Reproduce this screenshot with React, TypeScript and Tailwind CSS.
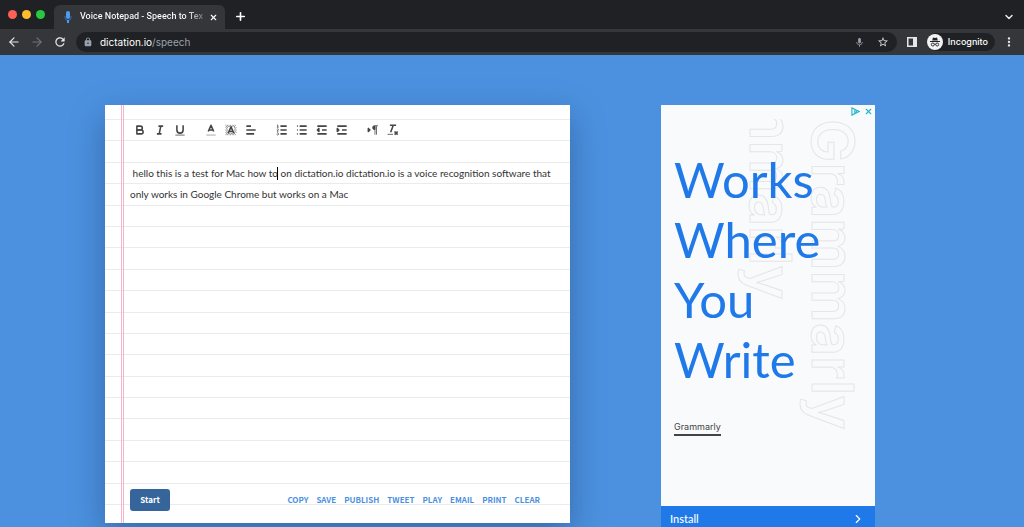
import React from 'react';
import { ArrowLeft, ArrowRight, ChevronDown, ChevronRight, Plus, X } from 'lucide-react';
import {
  MdLock,
  MdMic,
  MdMoreVert,
  MdRefresh,
  MdStarBorder,
} from 'react-icons/md';

const ICON_GROUPS: { label: string; icon: React.ReactNode }[][] = [
  [
    {
      label: 'Bold',
      icon: (
        <>
          <path d="M5,4H9.5a2.5,2.5,0,0,1,0,5H5Z" />
          <path d="M5,9h5.5a2.5,2.5,0,0,1,0,5H5Z" />
        </>
      ),
    },
    { label: 'Italic', icon: <path d="M7,4h6M5,14h6M8,14L10,4" /> },
    {
      label: 'Underline',
      icon: (
        <>
          <path d="M5,3V9a4,4,0,0,0,8,0V3" />
          <rect x="3" y="15" width="12" height="1" fill="currentColor" stroke="none" />
        </>
      ),
    },
  ],
  [
    {
      label: 'Text color',
      icon: (
        <>
          <path d="M3,15.5h12" opacity="0.4" strokeWidth="1.5" />
          <path d="M5.5,11L9,3l3.5,8M6.38,9h5.25" />
        </>
      ),
    },
    {
      label: 'Background color',
      icon: (
        <>
          <path d="M2,3h14M2,6h3M13,6h3M2,9h3M13,9h3M2,12h3M13,12h3M2,15h14" strokeDasharray="1 1" strokeWidth="1" />
          <path d="M3,4.5h12M3,7.5h2M14,7.5h2M3,10.5h2M14,10.5h2M3,13.5h12" strokeDasharray="1 1" strokeWidth="1" />
          <path d="M5.5,13L9,5l3.5,8M6.38,11h5.25" />
        </>
      ),
    },
    { label: 'Align', icon: <path d="M3,9h12M3,14h10M3,4h6" /> },
  ],
  [
    {
      label: 'Numbered list',
      icon: (
        <>
          <path d="M7,4h8M7,9h8M7,14h8" />
          <path
            d="M2.5,5.5h2M3.5,5.5v-3l-1,0.5M4.5,10.5h-2c0-.234,1.85-1.076,1.85-2.234A0.959,0.959,0,0,0,2.5,8.156M2.5,14.846a0.959,0.959,0,0,0,1.85-.109A0.7,0.7,0,0,0,3.75,14a0.688,0.688,0,0,0,.6-0.736,0.959,0.959,0,0,0-1.85-.109"
            strokeWidth="1"
          />
        </>
      ),
    },
    { label: 'Bulleted list', icon: <path d="M6,4h9M6,9h9M6,14h9M2.5,4h1M2.5,9h1M2.5,14h1" /> },
    {
      label: 'Decrease indent',
      icon: (
        <>
          <path d="M3,14h12M3,4h12M9,9h6" />
          <path d="M5,7v4L3,9Z" fill="currentColor" />
        </>
      ),
    },
    {
      label: 'Increase indent',
      icon: (
        <>
          <path d="M3,14h12M3,4h12M9,9h6" />
          <path d="M3,7v4L5,9Z" fill="currentColor" />
        </>
      ),
    },
  ],
  [
    {
      label: 'Text direction',
      icon: (
        <>
          <path d="M3,11L5,9,3,7Z" fill="currentColor" />
          <path d="M15.5,3.5H11a2.5,2.5,0,0,0,0,5h.5V3.5M11.5,4v11M13.5,4v11" fill="currentColor" strokeWidth="1" />
        </>
      ),
    },
    {
      label: 'Clear formatting',
      icon: (
        <>
          <path d="M5,3h8M6,12L9.35,3M11,11l4,4M15,11l-4,4" />
          <rect x="2" y="14" width="7" height="1" fill="currentColor" stroke="none" />
        </>
      ),
    },
  ],
];

const ACTIONS = ['COPY', 'SAVE', 'PUBLISH', 'TWEET', 'PLAY', 'EMAIL', 'PRINT', 'CLEAR'];

const RULES = Array.from({ length: 18 }, (_, i) => i);

const NOTE =
  ' hello this is a test for Mac how to on dictation.io dictation.io is a voice recognition software that only works in Google Chrome but works on a Mac';

const TabStrip: React.FC = () => {
  return (
    <div className="flex h-[29px] items-end bg-[#202124]">
      <div className="flex h-full w-[54px] items-center gap-[5px] pl-2">
        <span className="h-[9px] w-[9px] rounded-full bg-[#fe5f57]" />
        <span className="h-[9px] w-[9px] rounded-full bg-[#febc2e]" />
        <span className="h-[9px] w-[9px] rounded-full bg-[#28c840]" />
      </div>
      <div className="flex h-6 w-[171px] items-center rounded-t-md bg-[#35363a] pr-[7px] pl-2">
        <svg viewBox="0 0 12 12" className="h-3 w-3 shrink-0" aria-hidden="true">
          <rect x="4" y="0" width="4" height="8" rx="2" fill="#4a9df0" />
          <path d="M3,5v1.5a3,3,0,0,0,6,0V5" fill="none" stroke="#2f6fb5" />
          <path d="M6,9v3" stroke="#4a9df0" strokeWidth="2" />
        </svg>
        <span className="ml-[6px] flex-1 overflow-hidden whitespace-nowrap bg-linear-to-r from-white from-85% to-white/20 bg-clip-text font-[Roboto,sans-serif] text-[9px] font-medium text-transparent">
          Voice Notepad - Speech to Tex
        </span>
        <button type="button" aria-label="Close tab" className="ml-1 text-white">
          <X size={9} strokeWidth={3} />
        </button>
      </div>
      <button type="button" aria-label="New tab" className="ml-[9px] self-center pt-1 text-white">
        <Plus size={13} strokeWidth={3} />
      </button>
      <button type="button" aria-label="Search tabs" className="mr-[9px] ml-auto self-center pt-1 text-gray-200">
        <ChevronDown size={12} strokeWidth={3} />
      </button>
    </div>
  );
};

const AddressBar: React.FC = () => {
  return (
    <div className="flex h-[26px] items-center bg-[#35363a] text-gray-200">
      <div className="flex w-[76px] items-center gap-[9px] pl-[7px]">
        <button type="button" aria-label="Back">
          <ArrowLeft size={14} strokeWidth={2} />
        </button>
        <button type="button" aria-label="Forward" className="text-gray-500">
          <ArrowRight size={14} strokeWidth={2} />
        </button>
        <button type="button" aria-label="Reload">
          <MdRefresh size={14} />
        </button>
      </div>
      <div className="flex h-5 flex-1 items-center rounded-full bg-[#202124] pr-2 pl-[7px]">
        <MdLock size={10} className="text-gray-400" />
        <a href="#speech" className="ml-[7px] text-[10px] text-gray-400">
          <span className="text-white">dictation.io</span>/speech
        </a>
        <button type="button" aria-label="Microphone" className="ml-auto text-gray-400">
          <MdMic size={11} />
        </button>
        <button type="button" aria-label="Bookmark" className="ml-3 text-gray-300">
          <MdStarBorder size={12} />
        </button>
      </div>
      <button type="button" aria-label="Side panel" className="ml-[10px]">
        <svg viewBox="0 0 10 10" className="h-[10px] w-[10px]" aria-hidden="true">
          <rect x="0.75" y="0.75" width="8.5" height="8.5" fill="none" stroke="currentColor" strokeWidth="1.5" />
          <rect x="6" y="0" width="4" height="10" fill="currentColor" />
        </svg>
      </button>
      <div className="ml-[10px] flex h-[18px] items-center rounded-full bg-[#202124] pr-[7px]">
        <svg viewBox="0 0 16 16" className="h-4 w-4" aria-hidden="true">
          <circle cx="8" cy="8" r="8" fill="#f1f3f4" />
          <path d="M5.2,6.5L6,3.5l2,.5,2-.5.8,3ZM3,7h10v1H3Z" fill="#202124" />
          <circle cx="5.8" cy="10.5" r="1.5" fill="none" stroke="#202124" strokeWidth="0.9" />
          <circle cx="10.2" cy="10.5" r="1.5" fill="none" stroke="#202124" strokeWidth="0.9" />
          <path d="M7.2,10.3q.8-.6,1.6,0" fill="none" stroke="#202124" strokeWidth="0.8" />
        </svg>
        <span className="ml-[5px] text-[9px] font-medium text-white">Incognito</span>
      </div>
      <button type="button" aria-label="Menu" className="mr-2 ml-[7px]">
        <MdMoreVert size={14} />
      </button>
    </div>
  );
};

const NotePaper: React.FC = () => {
  return (
    <section className="relative flex flex-1 flex-col bg-white pt-[15px] pb-3 font-['Noto_Sans_CJK_SC','Open_Sans',sans-serif] shadow-[0_12px_32px_rgba(20,50,100,0.4)]">
      <div aria-hidden="true" className="absolute inset-x-0 top-[14px] bottom-[18px] flex flex-col border-t border-[#e9ebed]">
        {RULES.map((rule) => (
          <span key={rule} className="flex-1 border-b border-[#e9ebed]" />
        ))}
      </div>
      <div aria-hidden="true" className="absolute inset-y-0 left-4 w-[3px] border-x border-[#f7b3cc]" />

      <div className="relative flex h-5 items-center gap-[11px] pl-[25px]">
        {ICON_GROUPS.map((group, index) => (
          <div key={index} className="flex">
            {group.map(({ label, icon }) => (
              <button key={label} type="button" aria-label={label} className="flex w-5 justify-center text-[#444]">
                <svg
                  viewBox="0 0 18 18"
                  className="h-[14px] w-[14px]"
                  fill="none"
                  stroke="currentColor"
                  strokeWidth="2"
                  strokeLinecap="butt"
                  strokeLinejoin="round"
                >
                  {icon}
                </svg>
              </button>
            ))}
          </div>
        ))}
      </div>

      <div className="relative mt-[23px] flex flex-1 pr-3 pl-[25px]">
        <textarea
          aria-label="Dictated text"
          defaultValue={NOTE}
          spellCheck={false}
          className="w-full resize-none overflow-hidden bg-transparent font-[Lato,sans-serif] text-[10px] leading-[21px] text-[#333] outline-none"
        />
        <span aria-hidden="true" className="absolute top-1 left-[172px] h-[13px] w-px bg-black" />
      </div>

      <div className="relative flex items-center justify-between pr-[30px] pl-[25px]">
        <button type="button" className="h-[22px] w-10 rounded-[3px] bg-[#36659c] text-[8px] font-bold text-white">
          Start
        </button>
        <div className="flex gap-2">
          {ACTIONS.map((action) => (
            <button key={action} type="button" className="text-[8px] font-bold text-[#4a90e2]">
              {action}
            </button>
          ))}
        </div>
      </div>
    </section>
  );
};

const AdPanel: React.FC = () => {
  return (
    <aside className="relative flex w-[214px] shrink-0 flex-col bg-[#f9fafc]">
      <div
        aria-hidden="true"
        className="absolute inset-x-0 top-[14px] h-[320px] overflow-hidden font-[Inter,sans-serif] text-[58px] leading-[104px] font-semibold text-transparent [-webkit-text-stroke:1px_#e4e6e9]"
      >
        <span className="absolute top-0 left-[120px] [writing-mode:vertical-rl]">Grammarly</span>
        <span className="absolute bottom-[139px] left-[58px] [writing-mode:vertical-rl]">Grammarly</span>
      </div>
      <div className="relative flex h-3 items-center justify-end gap-1 pr-[2px] text-[#1fb5cf]">
        <a href="#adchoices" aria-label="AdChoices">
          <svg viewBox="0 0 10 10" className="h-[9px] w-[9px]" fill="none" stroke="currentColor">
            <path d="M1,1v8l8-4Z" strokeWidth="1.2" />
            <path d="M4,4v2.5l2.5-1.5Z" />
          </svg>
        </a>
        <button type="button" aria-label="Close ad">
          <X size={9} strokeWidth={3} />
        </button>
      </div>
      <h2 className="relative mt-8 pl-[13px] font-[Lato,sans-serif] text-[49px] leading-[60px] text-[#2079e8]">
        Works
        <br />
        Where
        <br />
        You
        <br />
        Write
      </h2>
      <a
        href="#grammarly"
        className="relative mt-[31px] ml-[13px] self-start border-b-2 border-[#444] text-[9px] leading-[14px] text-[#444]"
      >
        Grammarly
      </a>
      <a
        href="#install"
        className="mt-auto flex h-[26px] shrink-0 items-center justify-between bg-[#2079e8] pr-[10px] pl-[9px] font-[Lato,sans-serif] text-[11px] font-medium text-white"
      >
        Install
        <ChevronRight size={14} strokeWidth={2} />
      </a>
    </aside>
  );
};

const App: React.FC = () => {
  return (
    <div className="flex h-screen flex-col overflow-hidden bg-[#4c91df] font-[Inter,sans-serif]">
      <header>
        <TabStrip />
        <AddressBar />
      </header>
      <main className="flex min-h-0 flex-1 gap-[91px] pt-[50px] pr-[149px] pl-[105px]">
        <div className="flex flex-1 pb-1">
          <NotePaper />
        </div>
        <div className="-mb-[5px] flex">
          <AdPanel />
        </div>
      </main>
    </div>
  );
};

export default App;
